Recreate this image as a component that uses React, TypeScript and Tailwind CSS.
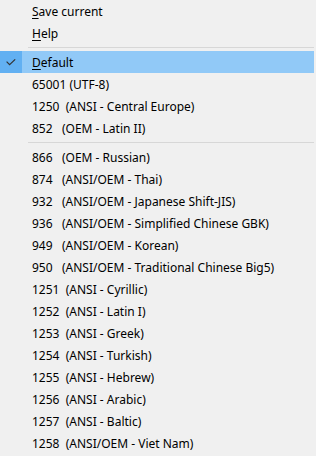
import React from 'react';

type Row =
  | { kind: 'item'; label: string; mnemonic?: boolean; checked?: boolean; highlighted?: boolean }
  | { kind: 'sep' };

const rows: Row[] = [
  { kind: 'item', label: 'Save current', mnemonic: true },
  { kind: 'item', label: 'Help', mnemonic: true },
  { kind: 'sep' },
  { kind: 'item', label: 'Default', mnemonic: true, checked: true, highlighted: true },
  { kind: 'item', label: '65001 (UTF-8)' },
  { kind: 'item', label: '1250  (ANSI - Central Europe)' },
  { kind: 'item', label: '852   (OEM - Latin II)' },
  { kind: 'sep' },
  { kind: 'item', label: '866   (OEM - Russian)' },
  { kind: 'item', label: '874   (ANSI/OEM - Thai)' },
  { kind: 'item', label: '932   (ANSI/OEM - Japanese Shift-JIS)' },
  { kind: 'item', label: '936   (ANSI/OEM - Simplified Chinese GBK)' },
  { kind: 'item', label: '949   (ANSI/OEM - Korean)' },
  { kind: 'item', label: '950   (ANSI/OEM - Traditional Chinese Big5)' },
  { kind: 'item', label: '1251  (ANSI - Cyrillic)' },
  { kind: 'item', label: '1252  (ANSI - Latin I)' },
  { kind: 'item', label: '1253  (ANSI - Greek)' },
  { kind: 'item', label: '1254  (ANSI - Turkish)' },
  { kind: 'item', label: '1255  (ANSI - Hebrew)' },
  { kind: 'item', label: '1256  (ANSI - Arabic)' },
  { kind: 'item', label: '1257  (ANSI - Baltic)' },
  { kind: 'item', label: '1258  (ANSI/OEM - Viet Nam)' },
];

function Check() {
  return (
    <svg width="10" height="7" viewBox="0 0 10 7" fill="none">
      <path d="M0.6 2.6 L3.6 5.6 L9.2 0.4" stroke="#333333" strokeWidth="1.2" />
    </svg>
  );
}

export default function App() {
  return (
    <div
      className="w-[316px] h-[456px] bg-[#f0f0f0] text-black text-[12px] overflow-hidden"
      style={{ fontFamily: '"Noto Sans", "Liberation Sans", sans-serif' }}
    >
      {rows.map((row, i) =>
        row.kind === 'sep' ? (
          <div key={i} className="h-[7px] flex items-center pl-[28px] pr-[2px]">
            <div className="h-px w-full bg-[#d7d7d7]" />
          </div>
        ) : (
          <div key={i} className="h-[22px] flex pr-[2px]">
            <div
              className={`w-[22px] flex items-center pl-[6px] pt-[1px] ${row.highlighted ? 'bg-[#62b0f2]' : ''}`}
            >
              {row.checked && <Check />}
            </div>
            <div
              className={`flex-1 flex items-center pl-[10px] pt-[1px] whitespace-pre ${row.highlighted ? 'bg-[#91c9f7]' : ''}`}
            >
              {row.mnemonic ? (
                <>
                  <span className="underline underline-offset-2">{row.label[0]}</span>
                  {row.label.slice(1)}
                </>
              ) : (
                row.label
              )}
            </div>
          </div>
        )
      )}
    </div>
  );
}
